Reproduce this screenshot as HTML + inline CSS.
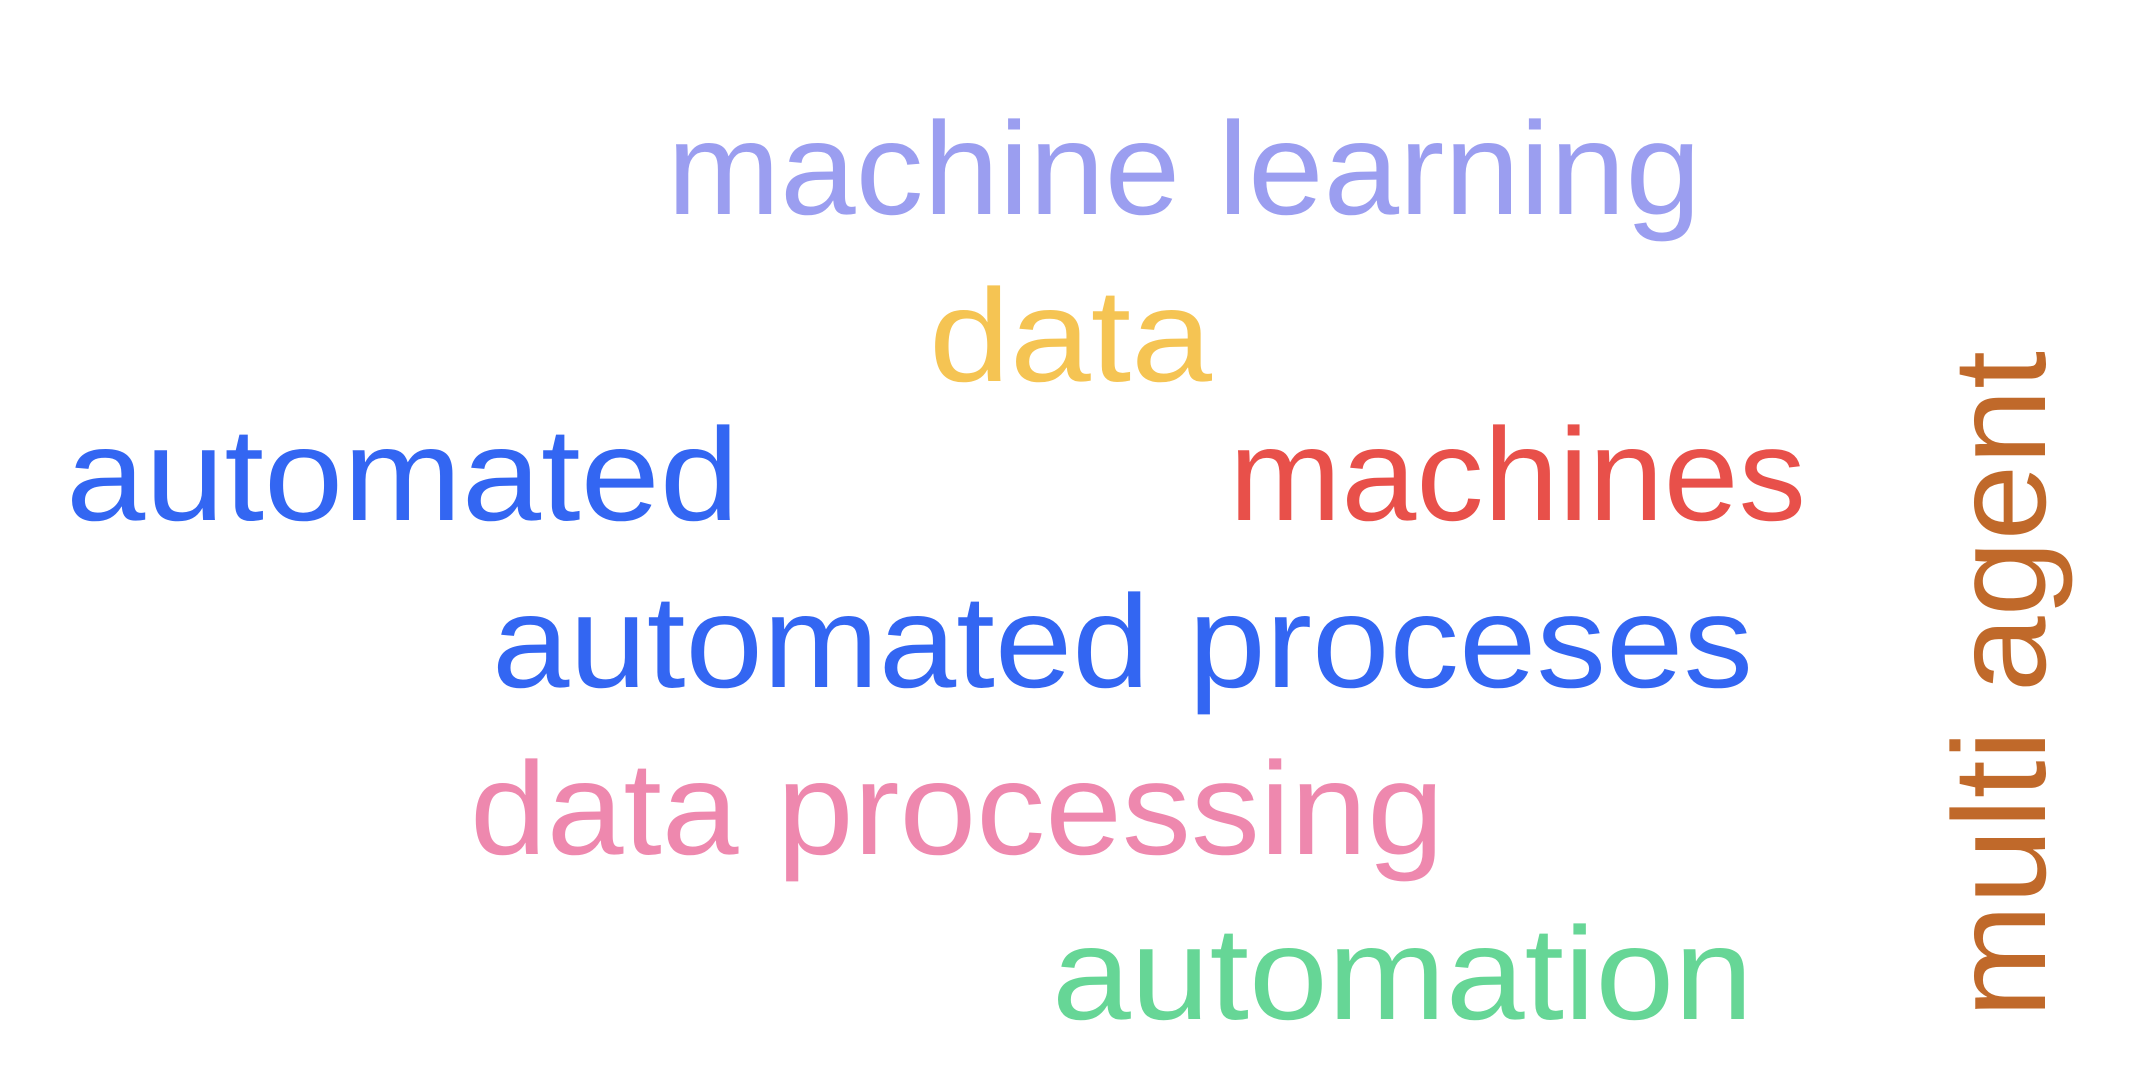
<!DOCTYPE html>
<html><head><meta charset="utf-8"><style>
html,body{margin:0;padding:0;background:#fff;width:2142px;height:1090px;overflow:hidden}
svg text{font-family:"Liberation Sans","DejaVu Sans",sans-serif;font-size:132px}
</style></head><body>
<svg width="2142" height="1090" viewBox="0 0 2142 1090" xmlns="http://www.w3.org/2000/svg">
<text x="667" y="214" fill="#9b9ef0" textLength="1034" lengthAdjust="spacingAndGlyphs">machine learning</text>
<text x="929" y="381" fill="#f5c453" textLength="283" lengthAdjust="spacingAndGlyphs">data</text>
<text x="66" y="520" fill="#3366f2" textLength="673" lengthAdjust="spacingAndGlyphs">automated</text>
<text x="1229" y="520" fill="#e8504a" textLength="577" lengthAdjust="spacingAndGlyphs">machines</text>
<text x="492" y="687" fill="#3366f2" textLength="1261" lengthAdjust="spacingAndGlyphs">automated proceses</text>
<text x="470" y="854" fill="#ee88ae" textLength="974" lengthAdjust="spacingAndGlyphs">data processing</text>
<text x="1052" y="1019" fill="#66d696" textLength="701" lengthAdjust="spacingAndGlyphs">automation</text>
<text transform="translate(2045,1018) rotate(-90)" x="0" y="0" fill="#c0692a" textLength="667" lengthAdjust="spacingAndGlyphs">multi agent</text>
</svg>
</body></html>
